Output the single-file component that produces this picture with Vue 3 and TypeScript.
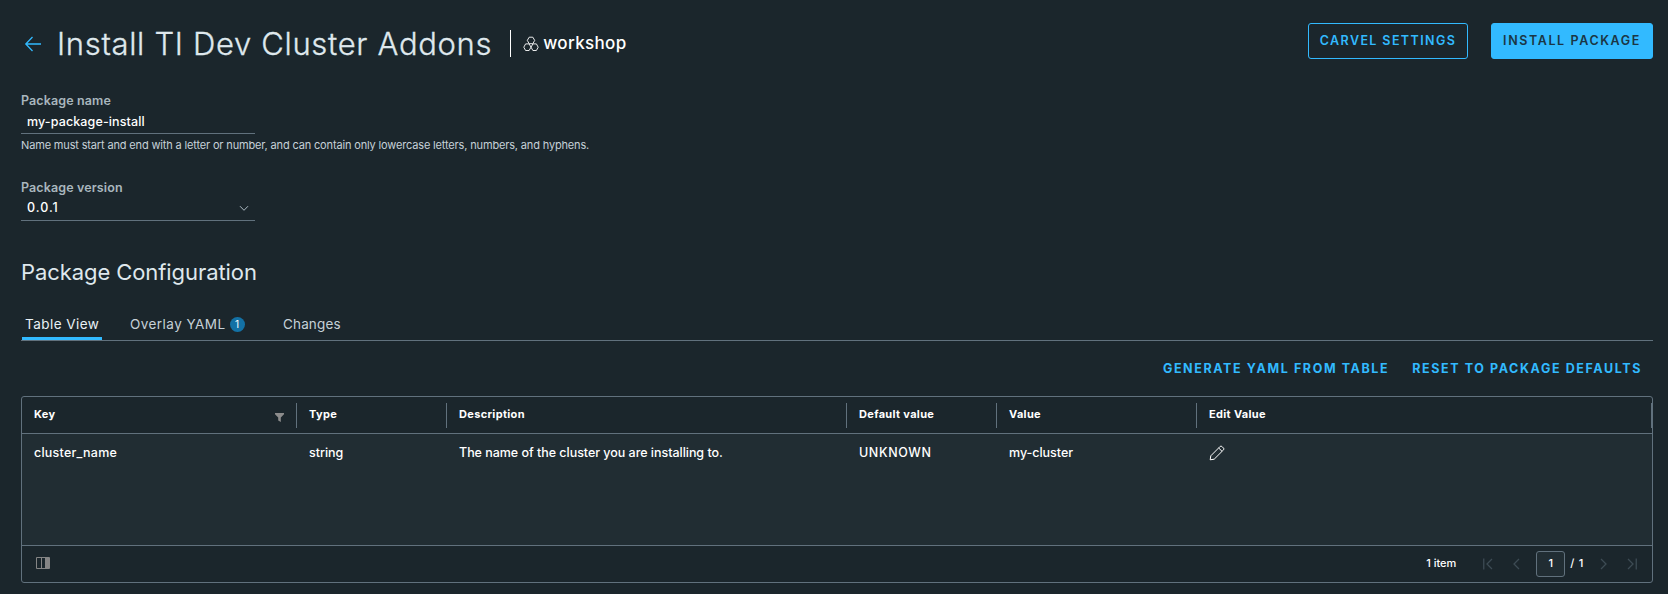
<script setup lang="ts">
interface Column {
  id: string
  title: string
  value: string
}

const columns: Column[] = [
  { id: 'key', title: 'Key', value: 'cluster_name' },
  { id: 'type', title: 'Type', value: 'string' },
  { id: 'description', title: 'Description', value: 'The name of the cluster you are installing to.' },
  { id: 'default', title: 'Default value', value: 'UNKNOWN' },
  { id: 'value', title: 'Value', value: 'my-cluster' },
  { id: 'edit', title: 'Edit Value', value: '' },
]
</script>

<template>
  <main class="page">
    <header class="header">
      <svg class="back" viewBox="0 0 18 18"><path d="M17 9H2M8.5 2L1.8 9l6.7 7" /></svg>
      <h1>Install TI Dev Cluster Addons</h1>
      <span class="rule"></span>
      <svg class="cluster" viewBox="0 0 16 16">
        <path d="M6.2 1.2h3.6l1.9 3.2-1.9 3.3H6.2L4.3 4.4zM2.6 7.9h3.5L8 11.2l-1.9 3.3H2.6L.8 11.2zM9.9 7.9h3.5l1.8 3.3-1.8 3.3H9.9L8 11.2z" />
      </svg>
      <span class="namespace">workshop</span>
      <div class="header-actions">
        <button class="btn outline">CARVEL SETTINGS</button>
        <button class="btn solid">INSTALL PACKAGE</button>
      </div>
    </header>

    <section class="field">
      <label>Package name</label>
      <div class="control"><span class="name-value">my-package-install</span></div>
      <p class="help">Name must start and end with a letter or number, and can contain only lowercase letters, numbers, and hyphens.</p>
    </section>
    <section class="field version">
      <label>Package version</label>
      <div class="control">
        <span class="version-value">0.0.1</span>
        <svg class="chevron" viewBox="0 0 10 7"><path d="M1 1.2l4 4.1 4-4.1" /></svg>
      </div>
    </section>

    <h2>Package Configuration</h2>

    <nav class="tabs">
      <a class="tab active">Table View</a>
      <a class="tab overlay"><span>Overlay YAML</span><span class="badge">1</span></a>
      <a class="tab changes">Changes</a>
    </nav>

    <div class="links">
      <a class="generate">GENERATE YAML FROM TABLE</a>
      <a class="reset">RESET TO PACKAGE DEFAULTS</a>
    </div>

    <section class="grid">
      <div class="row head">
        <div v-for="c in columns" :key="c.id" class="cell" :class="c.id">
          <span>{{ c.title }}</span>
          <svg v-if="c.id === 'key'" class="filter" viewBox="0 0 9 9"><path d="M0 0h9v1.2L5.8 4.6V9L3.2 7.6v-3L0 1.2z" /></svg>
        </div>
      </div>
      <div class="row body">
        <div v-for="c in columns" :key="c.id" class="cell" :class="c.id">
          <span v-if="c.value">{{ c.value }}</span>
          <svg v-else class="pencil" viewBox="0 0 16 16"><path d="M1.2 14.8l.6-4L11.2 1.4q.8-.7 1.6 0l1.8 1.8q.7.8 0 1.6L5.2 14.2zM9.7 3l3.3 3.3" /></svg>
        </div>
      </div>
      <footer class="footer">
        <svg class="cols" viewBox="0 0 14 12"><path class="fill" d="M9.5 1H13v10H9.5z" /><path d="M.5.5h13v11H.5zM5.5.5v11M9.5.5v11" /></svg>
        <span class="items">1 item</span>
        <svg class="nav first" viewBox="0 0 10 12"><path d="M.75.5v11M9 1L4 6l5 5" /></svg>
        <svg class="nav prev" viewBox="0 0 10 12"><path d="M8 1L3 6l5 5" /></svg>
        <span class="page-input">1</span>
        <span class="total">/ 1</span>
        <svg class="nav next" viewBox="0 0 10 12"><path d="M2 1l5 5-5 5" /></svg>
        <svg class="nav last" viewBox="0 0 10 12"><path d="M9.25.5v11M1 1l5 5-5 5" /></svg>
      </footer>
    </section>
  </main>
</template>

<style>
body {
  margin: 0;
  background: #1b262c;
}
</style>

<style scoped>
* {
  box-sizing: border-box;
}
.page {
  height: 594px;
  padding: 23px 15px 0 21px;
  overflow: hidden;
  background: #1b262c;
  color: #fff;
  font-family: Inter, "Open Sans", sans-serif;
}
svg {
  display: block;
  flex: none;
  fill: none;
  stroke: currentColor;
}
.header {
  display: flex;
  align-items: flex-start;
  height: 69px;
}
.back {
  width: 18px;
  height: 18px;
  margin: 12px 0 0 3px;
  color: #32baff;
  stroke-width: 1.3;
}
h1 {
  margin: 0 0 0 15px;
  font-size: 31px;
  font-weight: 300;
  line-height: 41px;
  letter-spacing: 0.67px;
  color: #dfe8ed;
  -webkit-text-stroke: 0.3px #dfe8ed;
  white-space: nowrap;
}
.rule {
  width: 1px;
  height: 27px;
  margin: 7px 0 0 18px;
  background: #fff;
}
.cluster {
  width: 16px;
  height: 16px;
  margin: 13px 0 0 12px;
  stroke-width: 0.9;
}
.namespace {
  margin-left: 4px;
  font-size: 17px;
  font-weight: 500;
  line-height: 40px;
  letter-spacing: 0.35px;
}
.header-actions {
  display: flex;
  gap: 23px;
  margin-left: auto;
}
.btn {
  height: 36px;
  padding: 0 0 2px;
  border: 1px solid #32baff;
  border-radius: 3px;
  font: 600 12.5px Inter, sans-serif;
  letter-spacing: 1.4px;
  white-space: nowrap;
}
.outline {
  width: 160px;
  background: none;
  color: #32baff;
}
.solid {
  width: 162px;
  background: #32baff;
  color: #1b3644;
  letter-spacing: 1.6px;
}
.field label {
  display: block;
  font-size: 12.5px;
  font-weight: 600;
  line-height: 17px;
  letter-spacing: 0.12px;
  color: #a9b6be;
}
.control {
  display: flex;
  justify-content: space-between;
  width: 234px;
  height: 25px;
  padding: 0 6px;
  border-bottom: 1px solid #61717d;
  font-size: 12.5px;
  font-weight: 500;
  line-height: 25px;
}
.name-value {
  letter-spacing: 0.12px;
}
.version-value {
  letter-spacing: 1px;
  line-height: 23px;
}
.chevron {
  width: 10px;
  height: 7px;
  margin-top: 9px;
  color: #adbbc4;
}
.help {
  margin: 0;
  font-size: 11px;
  line-height: 22px;
  letter-spacing: -0.155px;
  color: #c6d1d8;
  white-space: nowrap;
}
.version {
  margin-top: 23px;
}
h2 {
  margin: 36px 0 0;
  font-size: 22px;
  font-weight: 400;
  line-height: 30px;
  letter-spacing: -0.08px;
  color: #dfe8ed;
}
.tabs {
  display: flex;
  height: 31px;
  margin-top: 23px;
  padding-left: 1px;
  border-bottom: 1px solid #61717d;
  font-size: 13.5px;
  line-height: 28px;
  color: #c6d1d8;
}
.tab {
  display: flex;
  height: 30px;
  white-space: nowrap;
}
.active {
  width: 80px;
  padding-left: 3px;
  border-bottom: 3px solid #32baff;
  color: #e9f1f5;
  letter-spacing: 0.45px;
}
.overlay {
  width: 154px;
  padding-left: 28px;
  letter-spacing: 0.45px;
}
.changes {
  padding-left: 27px;
  letter-spacing: 0.15px;
}
.badge {
  width: 15px;
  height: 15px;
  margin: 7px 0 0 4px;
  border-radius: 50%;
  background: #1371a5;
  color: #fff;
  font-size: 10px;
  letter-spacing: 0;
  line-height: 15px;
  text-align: center;
}
.links {
  display: flex;
  justify-content: flex-end;
  height: 55px;
  padding-right: 11px;
  font-size: 12.5px;
  font-weight: 700;
  letter-spacing: 1.6px;
  line-height: 56px;
  color: #32baff;
}
.generate {
  margin-right: 23px;
}
.grid {
  height: 187px;
  border: 1px solid #61717d;
  border-radius: 3px;
  overflow: hidden;
}
.row {
  display: grid;
  grid-template-columns: 275px 150px 400px 150px 200px 1fr;
}
.head {
  height: 37px;
  border-bottom: 1px solid #61717d;
  font-size: 11px;
  font-weight: 700;
  line-height: 34px;
  letter-spacing: 0.33px;
}
.cell {
  position: relative;
  display: flex;
  padding-left: 12px;
}
.head .cell::after {
  content: "";
  position: absolute;
  top: 6px;
  right: 0;
  width: 1px;
  height: 25px;
  background: #61717d;
}
.filter {
  width: 9px;
  height: 9px;
  margin: 16px 13px 0 auto;
  fill: #8c8c8c;
  stroke: none;
}
.body {
  height: 111px;
  background: #212d33;
  font-size: 12.5px;
  font-weight: 500;
  line-height: 37px;
  letter-spacing: -0.03px;
}
.body .key {
  letter-spacing: 0.24px;
}
.body .default {
  letter-spacing: 0.62px;
}
.pencil {
  width: 16px;
  height: 16px;
  margin-top: 11px;
}
.footer {
  display: flex;
  height: 37px;
  border-top: 1px solid #61717d;
  font-size: 11px;
  font-weight: 500;
  line-height: 34px;
}
.cols {
  width: 14px;
  height: 12px;
  margin: 11px 0 0 14px;
  color: #858585;
}
.fill {
  fill: #858585;
}
.items {
  margin-left: auto;
}
.nav {
  width: 10px;
  height: 12px;
  margin-top: 12px;
  color: #3d4b54;
  stroke-width: 1.3;
}
.first { margin-left: 27px; }
.prev { margin-left: 18px; }
.page-input {
  width: 29px;
  height: 26px;
  margin: 5px 0 0 15px;
  border: 1px solid #61717d;
  border-radius: 3px;
  background: #212d33;
  line-height: 23px;
  text-align: center;
}
.total {
  margin-left: 5px;
  letter-spacing: 0.7px;
}
.next { margin-left: 15px; }
.last { margin: 12px 15px 0 18px; }
</style>
